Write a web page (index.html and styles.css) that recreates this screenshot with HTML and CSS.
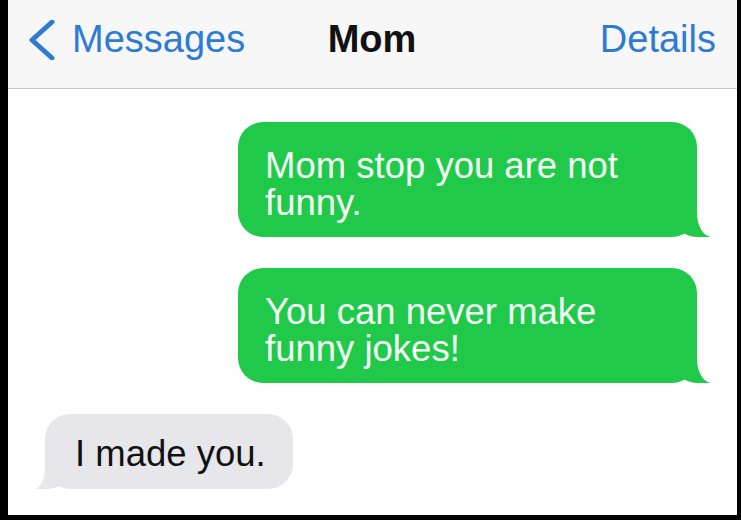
FILE: index.html
```html
<!doctype html>
<html lang="en">
	<head>
		<meta charset="UTF-8" />
		<meta name="viewport" content="width=device-width, initial-scale=1.0" />
		<title>Mom</title>
		<link rel="stylesheet" href="styles.css">
	</head>
	<body>
		<div class="screen">
			<header class="nav-bar">
				<a class="nav-back" href="#">
					<svg class="chevron" width="28" height="40" viewBox="0 0 28 40">
						<polyline points="24,2 4,20 24,38" fill="none" stroke="currentColor" stroke-width="5" stroke-linecap="round" stroke-linejoin="round" />
					</svg>
					<span>Messages</span>
				</a>
				<h1 class="nav-title">Mom</h1>
				<a class="nav-details" href="#">Details</a>
			</header>

			<div class="thread">
				<div class="bubble sent">Mom stop you are not funny.</div>
				<div class="bubble sent">You can never make funny jokes!</div>
				<div class="bubble received">I made you.</div>
			</div>
		</div>
	</body>
</html>
```

FILE: styles.css
```css
body {
	margin: 0;
	background-color: #000;
	font-family: 'Liberation Sans', Arial, sans-serif;
}
.screen {
	margin: 0 4px 0 8px;
	height: 515px;
	background-color: #fff;
	overflow: hidden;
}
.nav-bar {
	display: grid;
	grid-template-columns: 1fr auto 1fr;
	align-items: start;
	height: 68px;
	padding: 20px 21px 0 20px;
	background-color: #f7f7f8;
	border-bottom: 1px solid #c9c9cd;
	font-size: 38px;
	line-height: 38px;
}
.nav-back {
	display: flex;
	align-items: flex-start;
	gap: 16px;
	color: #2d7bd5;
	text-decoration: none;
}
.chevron {
	display: block;
}
.nav-title {
	margin: 0;
	font-size: 38px;
	font-weight: bold;
	color: #111;
}
.nav-details {
	justify-self: end;
	color: #2d7bd5;
	text-decoration: none;
}
.thread {
	display: flex;
	flex-direction: column;
	gap: 31px;
	padding: 33px 40px 0 37px;
}
.bubble {
	position: relative;
	font-size: 36.5px;
	line-height: 37px;
	border-radius: 25px;
}
.sent {
	align-self: flex-end;
	box-sizing: border-box;
	width: 459px;
	padding: 25px 27px 16px 27px;
	background-color: #20c94a;
	color: #f4fff5;
}
.sent::before {
	content: "";
	position: absolute;
	right: -15px;
	bottom: 0;
	width: 34px;
	height: 28px;
	background-color: #20c94a;
	border-bottom-left-radius: 20px 14px;
}
.sent::after {
	content: "";
	position: absolute;
	right: -30px;
	bottom: 0;
	width: 30px;
	height: 29px;
	background-color: #fff;
	border-bottom-left-radius: 15px 24px;
}
.received {
	align-self: flex-start;
	padding: 21px 27px 17px 30px;
	background-color: #e6e6eb;
	color: #111;
}
.received::before {
	content: "";
	position: absolute;
	left: -11px;
	bottom: 0;
	width: 32px;
	height: 26px;
	background-color: #e6e6eb;
	border-bottom-right-radius: 20px 14px;
}
.received::after {
	content: "";
	position: absolute;
	left: -30px;
	bottom: 0;
	width: 30px;
	height: 27px;
	background-color: #fff;
	border-bottom-right-radius: 11px 22px;
}
```
